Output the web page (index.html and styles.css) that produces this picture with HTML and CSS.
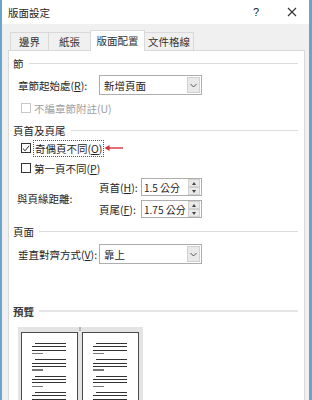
FILE: index.html
```html
<!DOCTYPE html>
<html lang="zh-Hant">
  <head>
    <meta charset="UTF-8" />
    <meta name="viewport" content="width=device-width, initial-scale=1.0" />
    <title>版面設定</title>
    <link rel="stylesheet" href="styles.css">
  </head>
  <body>
    <div class="window">
      <div class="titlebar">
        <span class="title">版面設定</span>
        <span class="help">?</span>
        <svg class="close" width="10" height="10" viewBox="0 0 10 10">
          <path d="M1 1 L9 9 M9 1 L1 9" stroke="#333" stroke-width="1.1" fill="none" />
        </svg>
      </div>

      <div class="client">
        <div class="tabs">
          <div class="tab tab-w1">邊界</div>
          <div class="tab tab-w2">紙張</div>
          <div class="tab tab-active">版面配置</div>
          <div class="tab tab-w4">文件格線</div>
        </div>

        <div class="panel">
          <div class="group-head"><span>節</span><i class="rule"></i></div>

          <div class="field-row row-section">
            <label class="field-label">章節起始處(<u>R</u>):</label>
            <div class="combo">
              <span class="combo-text">新增頁面</span>
              <span class="combo-btn">
                <svg width="7" height="5" viewBox="0 0 7 5"><path d="M0.5 1 L3.5 4 L6.5 1" stroke="#555" fill="none" /></svg>
              </span>
            </div>
          </div>

          <div class="check check-disabled row-endnote">
            <span class="box"></span>
            <span>不編章節附註(U)</span>
          </div>

          <div class="group-head row-hf"><span>頁首及頁尾</span><i class="rule"></i></div>

          <div class="check row-odd">
            <span class="box">
              <svg width="9" height="9" viewBox="0 0 9 9"><path d="M1 4.5 L3.5 7 L8 1.5" stroke="#222" stroke-width="1.1" fill="none" /></svg>
            </span>
            <span class="focus">奇偶頁不同(<u>O</u>)</span>
            <svg class="pointer" width="20" height="8" viewBox="0 0 20 8">
              <path d="M19 4 L3 4" stroke="#d8323c" stroke-width="1.4" />
              <path d="M0.5 4 L5.5 1 L5.5 7 Z" fill="#d8323c" />
            </svg>
          </div>

          <div class="check row-first">
            <span class="box"></span>
            <span>第一頁不同(<u>P</u>)</span>
          </div>

          <div class="margins">
            <span class="margins-label">與頁緣距離:</span>
            <div class="spins">
              <div class="spin-row">
                <label class="spin-label">頁首(<u>H</u>):</label>
                <div class="spin">
                  <span class="spin-text">1.5 公分</span>
                  <span class="spin-btns">
                    <span class="spin-up"></span>
                    <span class="spin-down"></span>
                  </span>
                </div>
              </div>
              <div class="spin-row">
                <label class="spin-label">頁尾(<u>F</u>):</label>
                <div class="spin">
                  <span class="spin-text">1.75 公分</span>
                  <span class="spin-btns">
                    <span class="spin-up"></span>
                    <span class="spin-down"></span>
                  </span>
                </div>
              </div>
            </div>
          </div>

          <div class="group-head row-page"><span>頁面</span><i class="rule"></i></div>

          <div class="field-row row-valign">
            <label class="field-label">垂直對齊方式(<u>V</u>):</label>
            <div class="combo">
              <span class="combo-text">靠上</span>
              <span class="combo-btn">
                <svg width="7" height="5" viewBox="0 0 7 5"><path d="M0.5 1 L3.5 4 L6.5 1" stroke="#555" fill="none" /></svg>
              </span>
            </div>
          </div>

          <div class="group-head row-preview"><span class="preview-title">預覽</span><i class="rule rule-thick"></i></div>

          <div class="preview">
            <div class="page">
              <div class="para"><i class="ln ln-first"></i><i class="ln"></i><i class="ln"></i><i class="ln ln-short"></i></div>
              <div class="para"><i class="ln ln-first"></i><i class="ln"></i><i class="ln"></i><i class="ln ln-short"></i></div>
              <div class="para"><i class="ln ln-first"></i><i class="ln"></i><i class="ln"></i><i class="ln ln-short"></i></div>
              <div class="para"><i class="ln ln-first"></i><i class="ln"></i><i class="ln"></i><i class="ln ln-short"></i></div>
            </div>
            <div class="gutter"></div>
            <div class="page">
              <div class="para"><i class="ln ln-first"></i><i class="ln"></i><i class="ln"></i><i class="ln ln-short"></i></div>
              <div class="para"><i class="ln ln-first"></i><i class="ln"></i><i class="ln"></i><i class="ln ln-short"></i></div>
              <div class="para"><i class="ln ln-first"></i><i class="ln"></i><i class="ln"></i><i class="ln ln-short"></i></div>
              <div class="para"><i class="ln ln-first"></i><i class="ln"></i><i class="ln"></i><i class="ln ln-short"></i></div>
            </div>
          </div>
        </div>
      </div>
    </div>
  </body>
</html>
```

FILE: styles.css
```css
html,
body {
  margin: 0;
  padding: 0;
  overflow: hidden;
}
body {
  font-family: "Noto Sans CJK TC", "Liberation Sans", sans-serif;
  font-size: 10.5px;
  color: #262626;
  background: #f0f0f0;
  white-space: nowrap;
}
u {
  text-decoration: underline;
  text-underline-offset: 1px;
}
.window {
  width: 312px;
  height: 400px;
  box-sizing: border-box;
  border-left: 2px solid #6aa3cc;
  border-right: 3px solid #6aa3cc;
  background: #f0f0f0;
  display: flex;
  flex-direction: column;
}
.titlebar {
  height: 24px;
  flex: none;
  background: #fff;
  display: flex;
  align-items: center;
  padding-left: 6px;
}
.title {
  font-size: 10.5px;
  flex: 1;
}
.help {
  font-family: "Liberation Sans", sans-serif;
  font-size: 11px;
  margin-right: 28px;
}
.close {
  margin-right: 12px;
}
.client {
  flex: 1;
  padding: 0 4px 0 6px;
  display: flex;
  flex-direction: column;
}
.tabs {
  height: 26px;
  display: flex;
  align-items: flex-end;
  padding-left: 2px;
}
.tab {
  height: 18px;
  box-sizing: border-box;
  border: 1px solid #d9d9d9;
  border-bottom: none;
  margin-right: -1px;
  background: #f0f0f0;
  display: flex;
  align-items: center;
  justify-content: center;
  color: #333;
}
.tab-w1 {
  width: 39px;
}
.tab-w2 {
  width: 43px;
}
.tab-active {
  width: 55px;
  height: 21px;
  background: #fff;
  position: relative;
  z-index: 1;
  margin-bottom: -1px;
  padding-bottom: 1px;
}
.tab-w4 {
  width: 50px;
}
.panel {
  flex: 1;
  background: #fff;
  border: 1px solid #d9d9d9;
  border-bottom: none;
  padding: 6px 6px 0 4px;
  display: flex;
  flex-direction: column;
}
.group-head {
  height: 12px;
  display: flex;
  align-items: center;
}
.rule {
  flex: 1;
  height: 1px;
  background: #dcdcdc;
  margin-left: 5px;
}
.rule-thick {
  height: 2px;
  background: #e6e6e6;
}
.preview-title {
  font-weight: bold;
  color: #3a3a3a;
}
.field-row {
  height: 20px;
  display: flex;
  align-items: center;
  padding-left: 5px;
}
.field-label {
  width: 81px;
}
.combo {
  width: 103px;
  height: 20px;
  box-sizing: border-box;
  border: 1px solid #adadad;
  display: flex;
  align-items: center;
}
.combo-text {
  flex: 1;
  padding-left: 4px;
}
.combo-btn {
  width: 13px;
  height: 16px;
  margin-right: 1px;
  background: #e9e9e9;
  border: 1px solid #d0d0d0;
  box-sizing: border-box;
  display: flex;
  align-items: center;
  justify-content: center;
}
.row-section {
  margin-top: 6px;
}
.check {
  height: 12px;
  display: flex;
  align-items: center;
  padding-left: 8px;
}
.box {
  width: 10px;
  height: 10px;
  box-sizing: border-box;
  border: 1px solid #333;
  margin-right: 3px;
  display: flex;
  align-items: center;
  justify-content: center;
}
.check-disabled {
  color: #a0a0a0;
}
.check-disabled .box {
  border-color: #c8c8c8;
}
.row-endnote {
  margin-top: 7px;
}
.row-hf {
  margin-top: 10px;
}
.row-odd {
  margin-top: 6px;
}
.focus {
  outline: 1px dotted #555;
  outline-offset: 0;
  padding: 0 1px;
}
.pointer {
  margin-left: 1px;
}
.row-first {
  margin-top: 8px;
}
.margins {
  margin-top: 4px;
  display: flex;
  align-items: center;
  padding-left: 4px;
}
.margins-label {
  width: 82px;
}
.spins {
  display: flex;
  flex-direction: column;
  gap: 4px;
}
.spin-row {
  display: flex;
  align-items: center;
}
.spin-label {
  width: 42px;
}
.spin {
  width: 61px;
  height: 18px;
  box-sizing: border-box;
  border: 1px solid #adadad;
  display: flex;
  align-items: center;
}
.spin-text {
  flex: 1;
  padding-left: 2px;
  font-size: 10px;
  overflow: hidden;
}
.spin-btns {
  width: 12px;
  height: 16px;
  flex: none;
  display: flex;
  flex-direction: column;
  margin-right: 1px;
}
.spin-up,
.spin-down {
  flex: 1;
  background: #e9e9e9;
  border: 1px solid #d0d0d0;
  display: flex;
  align-items: center;
  justify-content: center;
}
.spin-up::after {
  content: "";
  border-left: 2.5px solid transparent;
  border-right: 2.5px solid transparent;
  border-bottom: 3px solid #444;
}
.spin-down::after {
  content: "";
  border-left: 2.5px solid transparent;
  border-right: 2.5px solid transparent;
  border-top: 3px solid #444;
}
.row-page {
  margin-top: 7px;
}
.row-valign {
  margin-top: 7px;
}
.row-preview {
  margin-top: 41px;
}
.preview {
  margin-top: 10px;
  margin-left: 5px;
  width: 125px;
  background: #e4e4e4;
  padding: 5px 3px 0 3px;
  box-sizing: border-box;
  display: flex;
  height: 80px;
}
.page {
  width: 57px;
  background: #fff;
  border: 1px solid #4a4a4a;
  border-bottom: none;
  box-sizing: border-box;
  padding: 10px 11px 0 10px;
  display: flex;
  flex-direction: column;
  gap: 5px;
}
.gutter {
  width: 4px;
  position: relative;
}
.gutter::before {
  content: "";
  position: absolute;
  left: 1px;
  top: -5px;
  width: 2px;
  height: 4px;
  background: #b5b5b5;
}
.para {
  display: flex;
  flex-direction: column;
  gap: 2.3px;
}
.ln {
  display: block;
  height: 1px;
  background: #333;
}
.ln-first {
  margin-left: 3px;
}
.ln-short {
  width: 11px;
  height: 1.5px;
  background: #777;
}
```
